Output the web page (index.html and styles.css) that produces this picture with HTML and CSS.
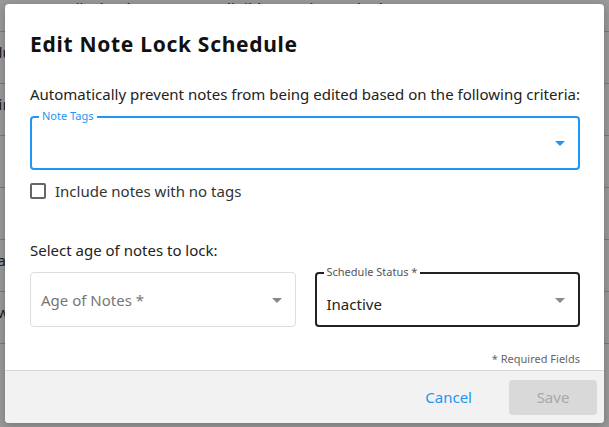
FILE: index.html
```html
<!DOCTYPE html>
<html lang="en">
<head>
    <meta charset="UTF-8">
    <meta name="viewport" content="width=device-width, initial-scale=1.0">
    <title>Edit Note Lock Schedule</title>
    <link rel="stylesheet" href="styles.css">
</head>
<body>

    <!-- Page behind the dialog -->
    <div class="page">
        <div class="page-row page-head">Hawaii Island Notes &nbsp;&nbsp;&nbsp;&nbsp;&nbsp;&nbsp;&nbsp;&nbsp;&nbsp; Eligible Practice Locked Tags</div>
        <div class="page-row">Schedule</div>
        <div class="page-row">Timeline</div>
        <div class="page-row">Note</div>
        <div class="page-row">Edit</div>
        <div class="page-row">Annual</div>
        <div class="page-row">Review &nbsp; Edit</div>
    </div>

    <!-- Dialog -->
    <div class="backdrop">
        <div class="dialog">
            <div class="dialog-body">
                <h1 class="dialog-title">Edit Note Lock Schedule</h1>
                <p class="intro">Automatically prevent notes from being edited based on the following criteria:</p>

                <div class="field field-focus">
                    <span class="field-label">Note Tags</span>
                    <span class="field-value"></span>
                    <span class="caret"></span>
                </div>

                <label class="check">
                    <span class="check-box"></span>
                    Include notes with no tags
                </label>

                <p class="section-label">Select age of notes to lock:</p>

                <div class="field-row">
                    <div class="field field-plain">
                        <span class="field-placeholder">Age of Notes *</span>
                        <span class="caret"></span>
                    </div>
                    <div class="field field-filled">
                        <span class="field-label">Schedule Status *</span>
                        <span class="field-value">Inactive</span>
                        <span class="caret"></span>
                    </div>
                </div>

                <div class="required">* Required Fields</div>
            </div>

            <div class="dialog-footer">
                <button class="btn-link">Cancel</button>
                <button class="btn-save" disabled>Save</button>
            </div>
        </div>
    </div>

</body>
</html>
```

FILE: styles.css
```css
* {
    box-sizing: border-box;
}

body {
    margin: 0;
    font-family: 'Noto Sans', 'Open Sans', sans-serif;
    color: #222;
    background: #fff;
    width: 609px;
    height: 427px;
    overflow: hidden;
    position: relative;
}

/* background page */
.page {
    font-size: 15px;
    color: #333;
}

.page-row {
    height: 52px;
    line-height: 40px;
    border-bottom: 1px solid #ccc;
    margin-left: -40px;
}

.page-head {
    height: 32px;
    line-height: 16px;
    padding-left: 36px;
    margin-left: 0;
}

/* dialog */
.backdrop {
    position: absolute;
    inset: 0;
    background: rgba(0, 0, 0, 0.4);
    padding: 4px 5px;
}

.dialog {
    background: #fff;
    border-radius: 4px;
    height: 419px;
    display: flex;
    flex-direction: column;
    overflow: hidden;
    box-shadow: 0 2px 8px rgba(0, 0, 0, 0.25);
}

.dialog-body {
    flex: 1;
    padding: 26px 24px 0 25px;
}

.dialog-title {
    margin: 0;
    font-size: 21px;
    letter-spacing: 0.7px;
    font-weight: bold;
    color: #111;
    line-height: 28px;
}

.intro {
    margin: 26px 0 0;
    font-size: 15px;
    line-height: 20px;
    color: #222;
}

.field {
    position: relative;
    height: 54px;
    border-radius: 4px;
    display: flex;
    align-items: center;
    padding: 0 10px;
}

.field-focus {
    margin-top: 12px;
    border: 2px solid #2196f3;
}

.field-focus .field-label {
    color: #2196f3;
}

.field-label {
    position: absolute;
    top: -9px;
    left: 7px;
    padding: 0 3px;
    background: #fff;
    font-size: 11px;
    line-height: 14px;
}

.field-value {
    font-size: 15px;
    color: #222;
    margin-top: 8px;
}

.field-placeholder {
    font-size: 15px;
    color: #777;
}

.caret {
    position: absolute;
    right: 13px;
    top: 50%;
    margin-top: -2px;
    width: 0;
    height: 0;
    border-left: 5px solid transparent;
    border-right: 5px solid transparent;
    border-top: 5px solid #888;
}

.field-focus .caret {
    border-top-color: #2196f3;
}

.check {
    display: flex;
    align-items: center;
    gap: 9px;
    margin-top: 11px;
    font-size: 15px;
    color: #333;
}

.check-box {
    width: 16px;
    height: 16px;
    border: 2px solid #666;
    border-radius: 2px;
}

.section-label {
    margin: 39px 0 0;
    font-size: 15px;
    line-height: 20px;
    color: #222;
}

.field-row {
    display: grid;
    grid-template-columns: 1fr 1fr;
    gap: 19px;
    margin-top: 12px;
}

.field-row .field {
    height: 55px;
}

.field-plain {
    border: 1px solid #ddd;
}

.field-filled {
    border: 2px solid #222;
}

.field-filled .field-label {
    color: #555;
}

.required {
    text-align: right;
    font-size: 11px;
    color: #666;
    margin-top: 24px;
}

.dialog-footer {
    height: 53px;
    background: #f2f2f2;
    border-top: 1px solid #d8d8d8;
    display: flex;
    align-items: center;
    justify-content: flex-end;
    padding: 0 7px 0 0;
    gap: 37px;
}

.btn-link {
    background: none;
    border: none;
    font-family: inherit;
    font-size: 15px;
    color: #2196f3;
    padding: 0;
    cursor: pointer;
}

.btn-save {
    width: 88px;
    height: 35px;
    border: none;
    border-radius: 4px;
    background: #d9d9d9;
    color: #a8a8a8;
    font-family: inherit;
    font-size: 15px;
}
```
